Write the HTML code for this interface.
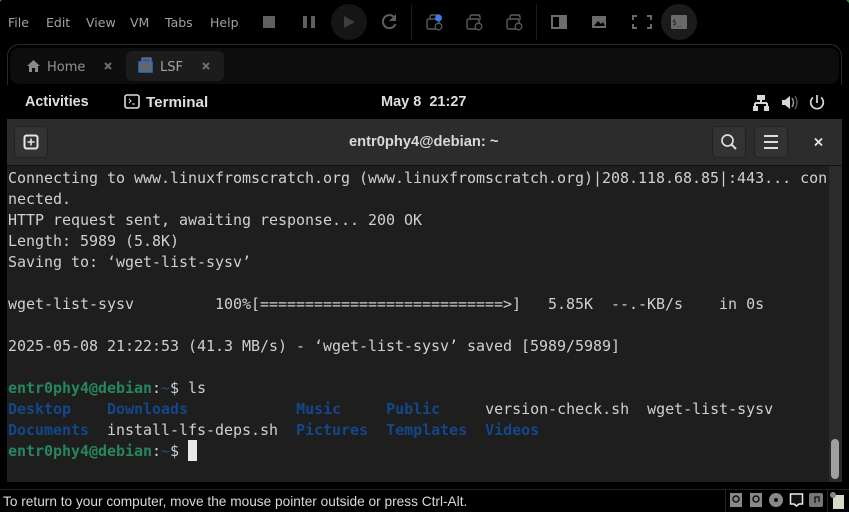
<!DOCTYPE html>
<html><head><meta charset="utf-8"><style>
html,body{margin:0;padding:0;background:#000;}
#r{position:relative;width:849px;height:512px;overflow:hidden;background:#000;font-family:"DejaVu Sans",sans-serif;}
.a{position:absolute;white-space:pre;}
.m{font-size:12.5px;color:#a2a2a2;top:15px;line-height:16px;}
.t{font-family:"DejaVu Sans Mono","Liberation Mono",monospace;font-size:15px;letter-spacing:-0.03px;line-height:21px;color:#d0d0d0;left:8px;}
.g{color:#26875f;font-weight:bold}.b{color:#12488b;font-weight:bold}.c{color:#d0d0d0;font-weight:normal}.h{color:#2a7bde;font-weight:normal;opacity:.5}
svg{position:absolute;overflow:visible}
.btn{position:absolute;width:34px;height:32px;top:126px;background:#333;border:1px solid #222;border-radius:5px;box-sizing:border-box}
</style></head><body><div id="r">
<div class="a m" style="left:8px">File</div><div class="a m" style="left:46px">Edit</div><div class="a m" style="left:86px">View</div><div class="a m" style="left:130px">VM</div><div class="a m" style="left:165px">Tabs</div><div class="a m" style="left:210px">Help</div>
<div class="a" style="left:263px;top:16px;width:12px;height:12px;background:#5f5f5f"></div>
<div class="a" style="left:303px;top:16px;width:4px;height:12px;background:#5f5f5f"></div><div class="a" style="left:311px;top:16px;width:4px;height:12px;background:#5f5f5f"></div>
<div class="a" style="left:331px;top:4px;width:36px;height:36px;border-radius:50%;background:#151515"></div>
<svg style="left:0;top:0" width="849" height="44">
<path d="M344 16L355 22L344 28Z" fill="#3d3d3d"/>
<path d="M394 17A6.5 6.5 0 1 0 395.500 24" fill="none" stroke="#5f5f5f" stroke-width="2"/><path d="M396 14V21H389Z" fill="#5f5f5f"/>
<path d="M411.500 4V40M536.500 4V40" stroke="#1c1c1c"/>
<g fill="none" stroke="#5a5a5a" stroke-width="1.400">
<path d="M427 27V21Q427 19 429 19H437Q439 19 439 21V29H429Q427 29 427 27ZM430 19V17Q430 15 432 15H438Q440 15 440 17V20"/>
<path d="M467 27V21Q467 19 469 19H477Q479 19 479 21V29H469Q467 29 467 27ZM470 19V17Q470 15 472 15H478Q480 15 480 17V20"/>
<path d="M507 27V21Q507 19 509 19H517Q519 19 519 21V29H509Q507 29 507 27ZM510 19V17Q510 15 512 15H518Q520 15 520 17V20"/>
</g>
<g fill="#000" stroke="#5a5a5a" stroke-width="1.300"><circle cx="438.500" cy="26.500" r="3.300"/><circle cx="478.500" cy="26.500" r="3.300"/><circle cx="518.500" cy="26.500" r="3.300"/></g>
<circle cx="438.500" cy="18" r="3.500" fill="#3b7bea"/>
<rect x="551" y="15" width="16" height="14" fill="#6c6c6c"/><rect x="553" y="17" width="6" height="10" fill="#000"/>
<rect x="592" y="16" width="14" height="12" fill="#6a6a6a"/><path d="M594 26L598 21L601 24L603 22L605 26Z" fill="#000"/>
<path d="M633 20V16H637M647 16H651V20M651 24V28H647M637 28H633V24" fill="none" stroke="#6a6a6a" stroke-width="2"/>
<circle cx="679" cy="22" r="18" fill="#1b1b1b"/><rect x="671" y="15" width="16" height="14" rx="1" fill="#6a6a6a"/>
<text x="672" y="25" font-family="DejaVu Sans Mono" font-size="8" fill="#222">$_</text>
<path d="M0 0H2L0 2ZM849 0H846L849 3Z" fill="#1a8a2a"/>
</svg>
<div class="a" style="left:7px;top:44px;width:835px;height:60px;border:1px solid #2a2a2a;border-bottom:0;border-radius:12px 12px 0 0;box-sizing:border-box;background:#000"></div>
<div class="a" style="left:10px;top:48px;width:829px;height:36px;background:#0d0d0d;border-radius:9px"></div>
<div class="a" style="left:126px;top:51px;width:98px;height:30px;background:#1c1c1c;border-radius:6px"></div>
<svg style="left:0;top:44px" width="240" height="40">
<path d="M27 22L33.500 16L40 22H38V28H35V24H32V28H29V22Z" fill="#8a8a8a"/>
<path d="M105 19L111 25M111 19L105 25M203 19L209 25M209 19L203 25" stroke="#6d6d6d" stroke-width="2"/>
<rect x="142" y="14" width="9" height="8" fill="#555" stroke="#5c8fd0"/><rect x="139" y="18" width="13" height="10" fill="#666" stroke="#2f6fc0" stroke-width="1.500"/>
</svg>
<div class="a" style="left:47px;top:60px;font-size:13px;line-height:16px;color:#8f9396">Home</div>
<div class="a" style="left:160px;top:60px;font-size:13px;line-height:16px;color:#a0a4a8">LSF</div>
<div class="a" style="left:7px;top:85px;width:835px;height:34px;background:#000"></div>
<div class="a" style="left:25px;top:94px;line-height:17px;font-weight:bold;font-family:'Liberation Sans',sans-serif;color:#dedede;font-size:14.300px">Activities</div>
<svg style="left:0;top:85px" width="849" height="34">
<rect x="125" y="10" width="14" height="13" rx="2" fill="none" stroke="#ddd" stroke-width="1.600"/><path d="M129 14L131 16L129 18M132 19H135" fill="none" stroke="#ddd"/>
<g fill="#d8d8d8"><rect x="757" y="10" width="8" height="5"/><rect x="760" y="15" width="2" height="3"/><rect x="755" y="17" width="12" height="2"/><rect x="754" y="18" width="2" height="3"/><rect x="766" y="18" width="2" height="3"/><rect x="753" y="21" width="5" height="5"/><rect x="764" y="21" width="5" height="5"/></g>
<path d="M782 15H785L790 11V24L785 20H782Z" fill="#d8d8d8"/><path d="M792 13Q795 17.500 792 22" fill="none" stroke="#999" stroke-width="1.500"/><path d="M795 11Q799 17.500 795 24" fill="none" stroke="#555" stroke-width="1.500"/>
<path d="M813 12.500A6.300 6.300 0 1 0 821 12.500" fill="none" stroke="#d8d8d8" stroke-width="1.700"/><path d="M817 10V18" stroke="#d8d8d8" stroke-width="1.700"/>
</svg>
<div class="a" style="left:146px;top:94px;font-weight:bold;font-family:'Liberation Sans',sans-serif;color:#dedede;font-size:15.200px;line-height:17px">Terminal</div>
<div class="a" style="left:381px;top:94px;font-weight:bold;font-family:'Liberation Sans',sans-serif;color:#dedede;font-size:14.500px;line-height:17px">May 8  21:27</div>
<div class="a" style="left:7px;top:119px;width:835px;height:46px;background:#2c2c2c;border-bottom:1px solid #111;box-sizing:content-box"></div>
<div class="btn" style="left:14px"></div><div class="btn" style="left:712px"></div><div class="btn" style="left:754px"></div>
<svg style="left:0;top:119px" width="849" height="46">
<rect x="24.500" y="16.500" width="13" height="13" rx="2" fill="none" stroke="#e6e6e6" stroke-width="2"/><path d="M31 19.500V26.500M27.500 23H34.500" stroke="#e6e6e6" stroke-width="1.600"/>
<circle cx="727.500" cy="21.500" r="5.500" fill="none" stroke="#ddd" stroke-width="1.700"/><path d="M731.500 25.500L736 30" stroke="#ddd" stroke-width="2"/>
<path d="M764 17H778M764 23H778M764 29H778" stroke="#ddd" stroke-width="2"/>
<path d="M815 19.500L822 26.500M822 19.500L815 26.500" stroke="#e6e6e6" stroke-width="1.800"/>
</svg>
<div class="a" style="left:349px;top:134px;font-weight:bold;font-family:'Liberation Sans',sans-serif;color:#d8d8d8;font-size:14.700px;line-height:17px">entr0phy4@debian: ~</div>
<div class="a" style="left:7px;top:166px;width:822px;height:316px;background:#1e1e1e"></div>
<div class="a" style="left:829px;top:166px;width:13px;height:316px;background:#2b2b2b"></div>
<div class="a" style="left:831px;top:439px;width:8px;height:40px;background:#a0a0a0;border-radius:4px"></div>
<div class="a t" style="top:168px">Connecting to www.linuxfromscratch.org (www.linuxfromscratch.org)|208.118.68.85|:443... con</div>
<div class="a t" style="top:189px">nected.</div>
<div class="a t" style="top:210px">HTTP request sent, awaiting response... 200 OK</div>
<div class="a t" style="top:231px">Length: 5989 (5.8K)</div>
<div class="a t" style="top:252px">Saving to: ‘wget-list-sysv’</div>
<div class="a t" style="top:294px">wget-list-sysv         100%[===========================>]   5.85K  --.-KB/s    in 0s</div>
<div class="a t" style="top:336px">2025-05-08 21:22:53 (41.3 MB/s) - ‘wget-list-sysv’ saved [5989/5989]</div>
<div class="a t" style="top:378px"><span class="g">entr0phy4@debian</span>:<span class="h">~</span>$ ls</div>
<div class="a t" style="top:399px"><span class="b">Desktop</span>    <span class="b">Downloads</span>            <span class="b">Music</span>     <span class="b">Public</span>     version-check.sh  wget-list-sysv</div>
<div class="a t" style="top:420px"><span class="b">Documents</span>  install-lfs-deps.sh  <span class="b">Pictures</span>  <span class="b">Templates</span>  <span class="b">Videos</span></div>
<div class="a t" style="top:441px"><span class="g">entr0phy4@debian</span>:<span class="h">~</span>$</div>
<div class="a" style="left:188px;top:440px;width:9px;height:21px;background:#e8e8e8"></div>
<div class="a" style="left:0;top:489px;width:849px;height:1px;background:#222"></div>
<div class="a" style="left:725px;top:490px;width:1px;height:22px;background:#222"></div>
<div class="a" style="left:827px;top:490px;width:1px;height:22px;background:#222"></div>
<div class="a" style="left:3px;top:494px;font-family:'Liberation Sans',sans-serif;font-size:13.680px;line-height:15px;color:#d8d8d8">To return to your computer, move the mouse pointer outside or press Ctrl-Alt.</div>
<svg style="left:0;top:490px" width="849" height="22">
<rect x="730" y="3" width="12" height="14" fill="#888"/><circle cx="736" cy="9" r="3" fill="none" stroke="#111" stroke-width="1.500"/>
<rect x="750" y="3" width="12" height="14" fill="#888"/><circle cx="756" cy="9" r="3" fill="none" stroke="#111" stroke-width="1.500"/>
<circle cx="776" cy="10" r="7" fill="#888"/><circle cx="776" cy="10" r="2" fill="#111"/>
<path d="M790.500 4H802.500V14H799L796.500 16L794 14H790.500Z" fill="#111" stroke="#eee" stroke-width="1.500"/>
<rect x="809" y="3" width="14" height="14" rx="2" fill="#777"/><path d="M815 13V7H819V12" fill="none" stroke="#111" stroke-width="1.300"/>
<path d="M833 5H844V19H833Z" fill="#d8d8c8"/><circle cx="833" cy="5" r="3" fill="#888"/>
</svg>
</div></body></html>
